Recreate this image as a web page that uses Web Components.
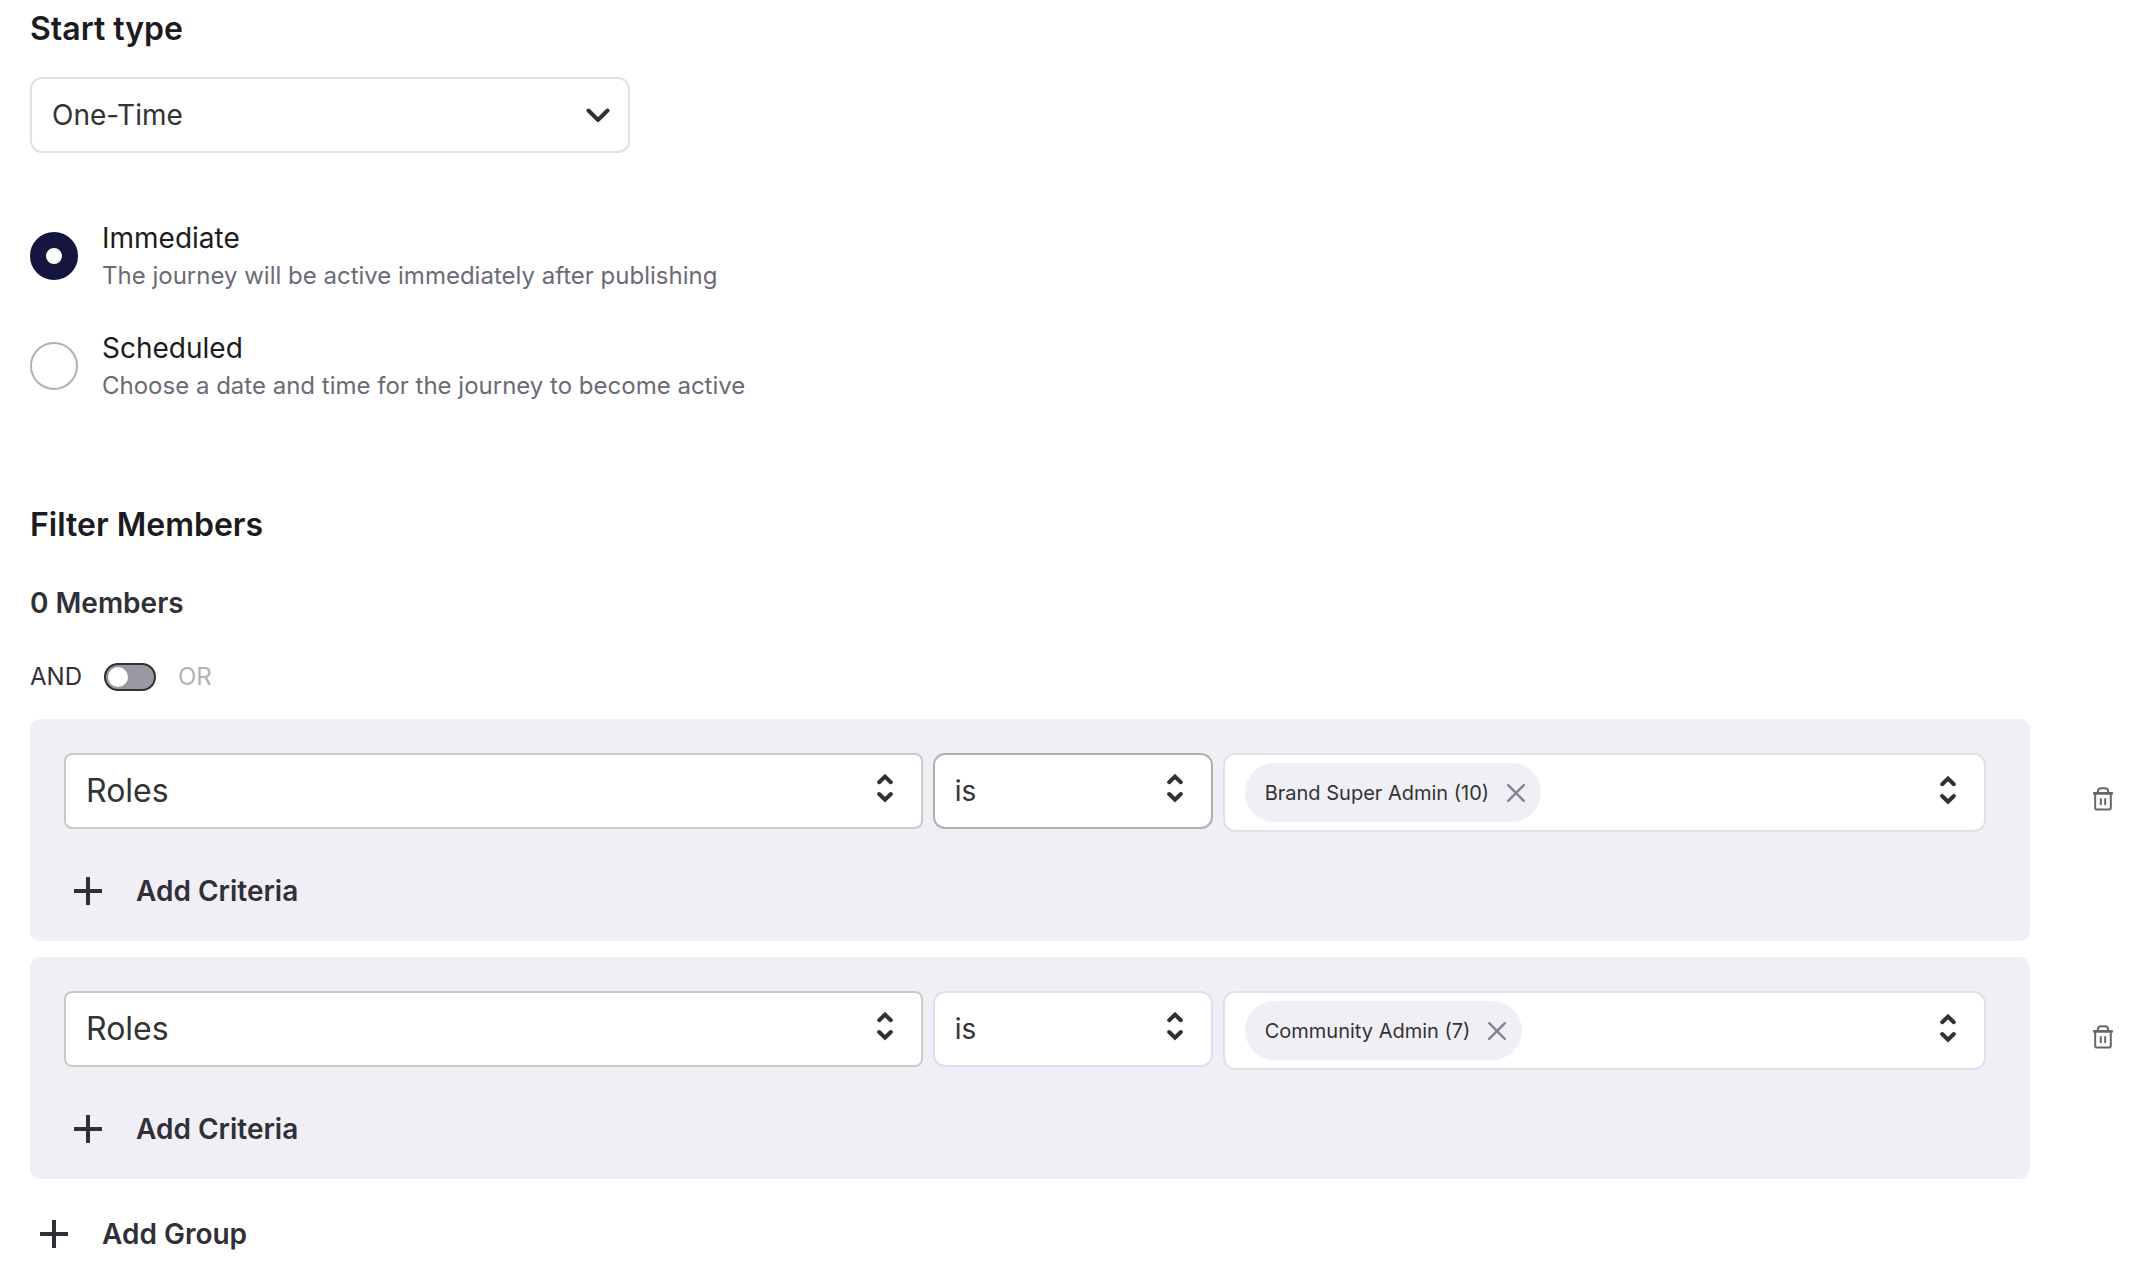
<!DOCTYPE html>
<html lang="en">
<head>
<meta charset="utf-8">
<meta name="viewport" content="width=device-width, initial-scale=1">
<title>Journey start</title>
<style>
    body {
        margin: 0;
        background: #fff;
        color: #313038;
        font-family: Inter, "Liberation Sans", sans-serif;
        font-size: 28px;
        line-height: 36px;
    }
</style>
</head>
<body>
<journey-settings></journey-settings>

<script>
const CHEVRON_DOWN = `
    <svg class="icon" width="24" height="14" viewBox="0 0 24 14" aria-hidden="true">
        <path d="M2.5 2.5 12 12 21.5 2.5" fill="none" stroke="#313038" stroke-width="4" stroke-linecap="round"/>
    </svg>
`;

const CHEVRON_UP_DOWN = `
    <svg class="icon" width="16" height="34" viewBox="0 0 16 34" aria-hidden="true">
        <path d="M2.2 8.2 8 2.6 13.8 8.2M2.2 20 8 25.6 13.8 20" fill="none" stroke="#313038" stroke-width="4" stroke-linecap="round"/>
    </svg>
`;

const ARROWS = { down: CHEVRON_DOWN, both: CHEVRON_UP_DOWN };

class SelectField extends HTMLElement {
    constructor() {
        super();
        this.attachShadow({ mode: 'open' });
    }

    connectedCallback() {
        const label = this.getAttribute('label');
        const value = this.getAttribute('value');
        const arrow = ARROWS[this.getAttribute('arrow')] || CHEVRON_UP_DOWN;

        this.shadowRoot.innerHTML = `
            <style>
                /* The select and its arrow share one grid cell */
                :host {
                    display: grid;
                    align-items: center;
                }

                select {
                    grid-area: 1 / 1;
                    width: 100%;
                    height: 76px;
                    margin: 0;
                    padding: 0 56px 0 20px;
                    appearance: none;
                    border: 2px solid var(--field-border, #e1e0ea);
                    border-radius: var(--field-radius, 12px);
                    background: #fff;
                    color: #333;
                    font: inherit;
                    font-size: var(--field-size, 28px);
                }

                .icon {
                    grid-area: 1 / 1;
                    justify-self: end;
                    margin-right: var(--arrow-inset, 30px);
                    pointer-events: none;
                }
            </style>

            <select aria-label="${label}">
                <option>${value}</option>
            </select>
            ${arrow}
        `;
    }
}

class RadioOption extends HTMLElement {
    constructor() {
        super();
        this.attachShadow({ mode: 'open' });
        this.shadowRoot.innerHTML = `
            <style>
                :host {
                    display: block;
                }

                label {
                    display: inline-flex;
                    align-items: center;
                    gap: 24px;
                    cursor: pointer;
                }

                input {
                    flex: none;
                    box-sizing: border-box;
                    width: 48px;
                    height: 48px;
                    margin: 0;
                    appearance: none;
                    border: 2px solid #b1b0ba;
                    border-radius: 50%;
                    background: #fff;
                }

                input:checked {
                    border: 16px solid #16153f;
                }

                .text {
                    display: flex;
                    flex-direction: column;
                    gap: 4px;
                    color: #1c1b20;
                }

                .hint {
                    color: #6b6a76;
                    font-size: 24px;
                    line-height: 32px;
                }
            </style>

            <label>
                <input type="radio">
                <span class="text">
                    <slot></slot>
                    <span class="hint"><slot name="hint"></slot></span>
                </span>
            </label>
        `;
        this._input = this.shadowRoot.querySelector('input');
    }

    connectedCallback() {
        this._input.checked = this.hasAttribute('checked');
        this._input.addEventListener('change', this._select.bind(this));
    }

    // Radios in separate shadow roots are not grouped by name
    _select() {
        this.parentNode.querySelectorAll('radio-option').forEach(option => {
            option._input.checked = option === this;
        });
    }
}

class ToggleSwitch extends HTMLElement {
    constructor() {
        super();
        this.attachShadow({ mode: 'open' });
        this.shadowRoot.innerHTML = `
            <style>
                :host {
                    display: block;
                    font-size: 24px;
                    line-height: 32px;
                }

                label {
                    display: inline-flex;
                    align-items: center;
                    gap: 22px;
                }

                input {
                    display: flex;
                    align-items: center;
                    box-sizing: border-box;
                    width: 52px;
                    height: 28px;
                    margin: 0;
                    padding: 0 2px;
                    appearance: none;
                    border: 2px solid #313038;
                    border-radius: 14px;
                    background: #9a98a3;
                }

                input::before {
                    content: "";
                    width: 20px;
                    height: 20px;
                    border-radius: 50%;
                    background: #fff;
                }

                input:checked {
                    justify-content: flex-end;
                }

                .off {
                    color: #b1b0ba;
                }
            </style>

            <label>
                <slot name="left"></slot>
                <input type="checkbox" role="switch">
                <span class="off"><slot name="right"></slot></span>
            </label>
        `;
    }
}

class AddButton extends HTMLElement {
    constructor() {
        super();
        this.attachShadow({ mode: 'open' });
        this.shadowRoot.innerHTML = `
            <style>
                :host {
                    display: flex;
                }

                button {
                    display: flex;
                    align-items: center;
                    gap: 34px;
                    margin: 0;
                    padding: 0 10px;
                    border: 0;
                    background: none;
                    color: inherit;
                    font: inherit;
                    font-weight: 600;
                    cursor: pointer;
                }
            </style>

            <button type="button">
                <svg width="28" height="28" viewBox="0 0 28 28" aria-hidden="true">
                    <path d="M14 0V28M0 14H28" stroke="#313038" stroke-width="4"/>
                </svg>
                <slot></slot>
            </button>
        `;
    }
}

class TagChip extends HTMLElement {
    constructor() {
        super();
        this.attachShadow({ mode: 'open' });
        this.shadowRoot.innerHTML = `
            <style>
                :host {
                    display: flex;
                    align-items: center;
                    gap: 18px;
                    height: 59px;
                    padding: 0 16px 0 20px;
                    border-radius: 30px;
                    background: #f0eff6;
                    color: #333;
                    font-size: 20px;
                    line-height: 28px;
                    white-space: nowrap;
                }

                button {
                    display: flex;
                    margin: 0;
                    padding: 0;
                    border: 0;
                    background: none;
                    cursor: pointer;
                }
            </style>

            <slot></slot>
            <button type="button" aria-label="Remove">
                <svg width="18" height="18" viewBox="0 0 18 18" aria-hidden="true">
                    <path d="M1.2 1.2 16.8 16.8M16.8 1.2 1.2 16.8" stroke="#85838f" stroke-width="2.4" stroke-linecap="round"/>
                </svg>
            </button>
        `;
    }

    connectedCallback() {
        this.shadowRoot.querySelector('button').addEventListener('click', () => this.remove());
    }
}

class TagPicker extends HTMLElement {
    constructor() {
        super();
        this.attachShadow({ mode: 'open' });
        this.shadowRoot.innerHTML = `
            <style>
                :host {
                    display: flex;
                    align-items: center;
                    gap: 12px;
                    box-sizing: border-box;
                    min-width: 0;
                    padding: 8px 28px 8px 20px;
                    border: 2px solid #e1e0ea;
                    border-radius: 12px;
                    background: #fff;
                }

                input {
                    flex: 1;
                    min-width: 0;
                    padding: 0;
                    border: 0;
                    outline: 0;
                    background: none;
                    color: inherit;
                    font: inherit;
                    font-size: 20px;
                }

                button {
                    display: flex;
                    margin: 0;
                    padding: 0;
                    border: 0;
                    background: none;
                }
            </style>

            <slot></slot>
            <input type="text" aria-label="Values">
            <button type="button" aria-label="Show values">${CHEVRON_UP_DOWN}</button>
        `;
    }
}

class FilterGroup extends HTMLElement {
    constructor() {
        super();
        this.attachShadow({ mode: 'open' });
        this.shadowRoot.innerHTML = `
            <style>
                :host {
                    display: flex;
                    align-items: flex-start;
                    gap: 60px;
                }

                .panel {
                    flex: 1;
                    min-width: 0;
                    display: flex;
                    flex-direction: column;
                    gap: 41px;
                    padding: 34px 44px 32px 34px;
                    border-radius: 10px;
                    background: #f0eff6;
                }

                .criteria {
                    display: grid;
                    grid-template-columns: 9fr 280px 8fr;
                    align-items: start;
                    gap: 10px;
                }

                .field {
                    --field-border: #c9c9c9;
                    --field-radius: 8px;
                    --field-size: 32px;
                }

                :host([active]) .operator {
                    --field-border: #b0b0b0;
                }

                .delete {
                    display: flex;
                    justify-content: center;
                    width: 26px;
                    margin: 68px 0 0;
                    padding: 0;
                    border: 0;
                    background: none;
                    cursor: pointer;
                }
            </style>

            <div class="panel">
                <div class="criteria">
                    <select-field class="field" label="Field" value="Roles"></select-field>
                    <select-field class="operator" label="Operator" value="is"></select-field>
                    <tag-picker><slot></slot></tag-picker>
                </div>
                <add-button>Add Criteria</add-button>
            </div>
            <button class="delete" type="button" aria-label="Delete group">
                <svg width="20" height="24" viewBox="0 0 20 24" fill="none" stroke="#646866" stroke-width="2" stroke-linecap="round" aria-hidden="true">
                    <path d="M1 6.4H19" stroke-width="2.6"/>
                    <path d="M4.8 6V4.6Q5 1.2 8.2 1.2H11.8Q15 1.2 15.2 4.6V6"/>
                    <path d="M2.2 6.5V20.4Q2.2 22.6 4.4 22.6H15.6Q17.8 22.6 17.8 20.4V6.5"/>
                    <path d="M7.8 12V17.2M12.2 12V17.2"/>
                </svg>
            </button>
        `;
    }

    connectedCallback() {
        this.shadowRoot.querySelector('.delete').addEventListener('click', () => this.remove());
    }
}

class JourneySettings extends HTMLElement {
    constructor() {
        super();
        this.attachShadow({ mode: 'open' });
        this.shadowRoot.innerHTML = `
            <style>
                :host {
                    display: block;
                    padding: 9px 30px 11px;
                }

                h2, h3 {
                    margin: 0;
                    font-weight: 600;
                }

                h2 {
                    color: #1c1b20;
                    font-size: 32px;
                    line-height: 40px;
                }

                h3 {
                    font-size: 28px;
                }

                .start-type {
                    max-width: 600px;
                    margin-top: 28px;
                    --arrow-inset: 20px;
                }

                .options {
                    display: flex;
                    flex-direction: column;
                    gap: 38px;
                    margin: 67px 0 103px;
                }

                h3, toggle-switch {
                    margin-top: 40px;
                }

                .groups {
                    display: flex;
                    flex-direction: column;
                    gap: 16px;
                    margin: 26px 0 37px;
                }
            </style>

            <section>
                <h2>Start type</h2>
                <select-field class="start-type" label="Start type" value="One-Time" arrow="down"></select-field>
                <div class="options" role="radiogroup" aria-label="Start">
                    <radio-option checked>
                        Immediate
                        <span slot="hint">The journey will be active immediately after publishing</span>
                    </radio-option>
                    <radio-option>
                        Scheduled
                        <span slot="hint">Choose a date and time for the journey to become active</span>
                    </radio-option>
                </div>
            </section>

            <section>
                <h2>Filter Members</h2>
                <h3>0 Members</h3>
                <toggle-switch>
                    <span slot="left">AND</span>
                    <span slot="right">OR</span>
                </toggle-switch>
                <div class="groups">
                    <filter-group active>
                        <tag-chip>Brand Super Admin (10)</tag-chip>
                    </filter-group>
                    <filter-group>
                        <tag-chip>Community Admin (7)</tag-chip>
                    </filter-group>
                </div>
                <add-button>Add Group</add-button>
            </section>
        `;
    }
}

customElements.define('select-field', SelectField);
customElements.define('radio-option', RadioOption);
customElements.define('toggle-switch', ToggleSwitch);
customElements.define('add-button', AddButton);
customElements.define('tag-chip', TagChip);
customElements.define('tag-picker', TagPicker);
customElements.define('filter-group', FilterGroup);
customElements.define('journey-settings', JourneySettings);
</script>
</body>
</html>
